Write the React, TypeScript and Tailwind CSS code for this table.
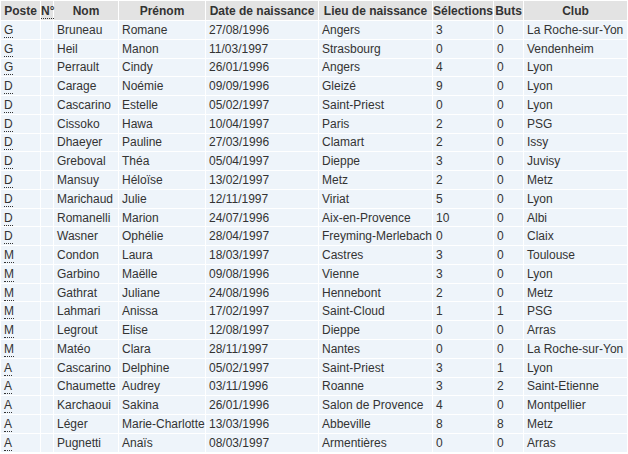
import React from "react";

const rows: string[][] = [
  ["G", "Bruneau", "Romane", "27/08/1996", "Angers", "3", "0", "La Roche-sur-Yon"],
  ["G", "Heil", "Manon", "11/03/1997", "Strasbourg", "0", "0", "Vendenheim"],
  ["G", "Perrault", "Cindy", "26/01/1996", "Angers", "4", "0", "Lyon"],
  ["D", "Carage", "Noémie", "09/09/1996", "Gleizé", "9", "0", "Lyon"],
  ["D", "Cascarino", "Estelle", "05/02/1997", "Saint-Priest", "0", "0", "Lyon"],
  ["D", "Cissoko", "Hawa", "10/04/1997", "Paris", "2", "0", "PSG"],
  ["D", "Dhaeyer", "Pauline", "27/03/1996", "Clamart", "2", "0", "Issy"],
  ["D", "Greboval", "Théa", "05/04/1997", "Dieppe", "3", "0", "Juvisy"],
  ["D", "Mansuy", "Héloïse", "13/02/1997", "Metz", "2", "0", "Metz"],
  ["D", "Marichaud", "Julie", "12/11/1997", "Viriat", "5", "0", "Lyon"],
  ["D", "Romanelli", "Marion", "24/07/1996", "Aix-en-Provence", "10", "0", "Albi"],
  ["D", "Wasner", "Ophélie", "28/04/1997", "Freyming-Merlebach", "0", "0", "Claix"],
  ["M", "Condon", "Laura", "18/03/1997", "Castres", "3", "0", "Toulouse"],
  ["M", "Garbino", "Maëlle", "09/08/1996", "Vienne", "3", "0", "Lyon"],
  ["M", "Gathrat", "Juliane", "24/08/1996", "Hennebont", "2", "0", "Metz"],
  ["M", "Lahmari", "Anissa", "17/02/1997", "Saint-Cloud", "1", "1", "PSG"],
  ["M", "Legrout", "Elise", "12/08/1997", "Dieppe", "0", "0", "Arras"],
  ["M", "Matéo", "Clara", "28/11/1997", "Nantes", "0", "0", "La Roche-sur-Yon"],
  ["A", "Cascarino", "Delphine", "05/02/1997", "Saint-Priest", "3", "1", "Lyon"],
  ["A", "Chaumette", "Audrey", "03/11/1996", "Roanne", "3", "2", "Saint-Etienne"],
  ["A", "Karchaoui", "Sakina", "26/01/1996", "Salon de Provence", "4", "0", "Montpellier"],
  ["A", "Léger", "Marie-Charlotte", "13/03/1996", "Abbeville", "8", "8", "Metz"],
  ["A", "Pugnetti", "Anaïs", "08/03/1997", "Armentières", "0", "0", "Arras"],
];

export default function App() {
  const th = "h-[19px] bg-[#e3e3e3] font-bold text-center p-0 whitespace-nowrap";
  const td = "h-[17.77px] bg-[#eef4fa] px-[3px] py-0 whitespace-nowrap overflow-hidden";
  return (
    <div className="w-[628px] h-[454px] bg-white overflow-hidden text-[12px] leading-[14px] text-[#333]" style={{ fontFamily: '"Liberation Sans", Arial, sans-serif' }}>
      <table className="table-fixed border-separate border-spacing-[1px] w-[627px]">
        <colgroup>
          <col className="w-[39px]" />
          <col className="w-[12px]" />
          <col className="w-[64px]" />
          <col className="w-[86px]" />
          <col className="w-[112px]" />
          <col className="w-[113px]" />
          <col className="w-[60px]" />
          <col className="w-[29px]" />
          <col className="w-[103px]" />
        </colgroup>
        <thead>
          <tr>
            <th className={th}>Poste</th>
            <th className={th}>
              <span className="border-b border-dotted border-[#333]">N°</span>
            </th>
            <th className={th}>Nom</th>
            <th className={th}>Prénom</th>
            <th className={th}>Date de naissance</th>
            <th className={th}>Lieu de naissance</th>
            <th className={th}>Sélections</th>
            <th className={th}>Buts</th>
            <th className={th}>Club</th>
          </tr>
        </thead>
        <tbody>
          {rows.map((r, i) => (
            <tr key={i}>
              <td className={td}>
                <span className="border-b border-dotted border-[#333]">{r[0]}</span>
              </td>
              <td className={td}></td>
              <td className={td}>{r[1]}</td>
              <td className={td}>{r[2]}</td>
              <td className={td}>{r[3]}</td>
              <td className={td}>{r[4]}</td>
              <td className={td}>{r[5]}</td>
              <td className={td}>{r[6]}</td>
              <td className={td}>{r[7]}</td>
            </tr>
          ))}
        </tbody>
      </table>
    </div>
  );
}
